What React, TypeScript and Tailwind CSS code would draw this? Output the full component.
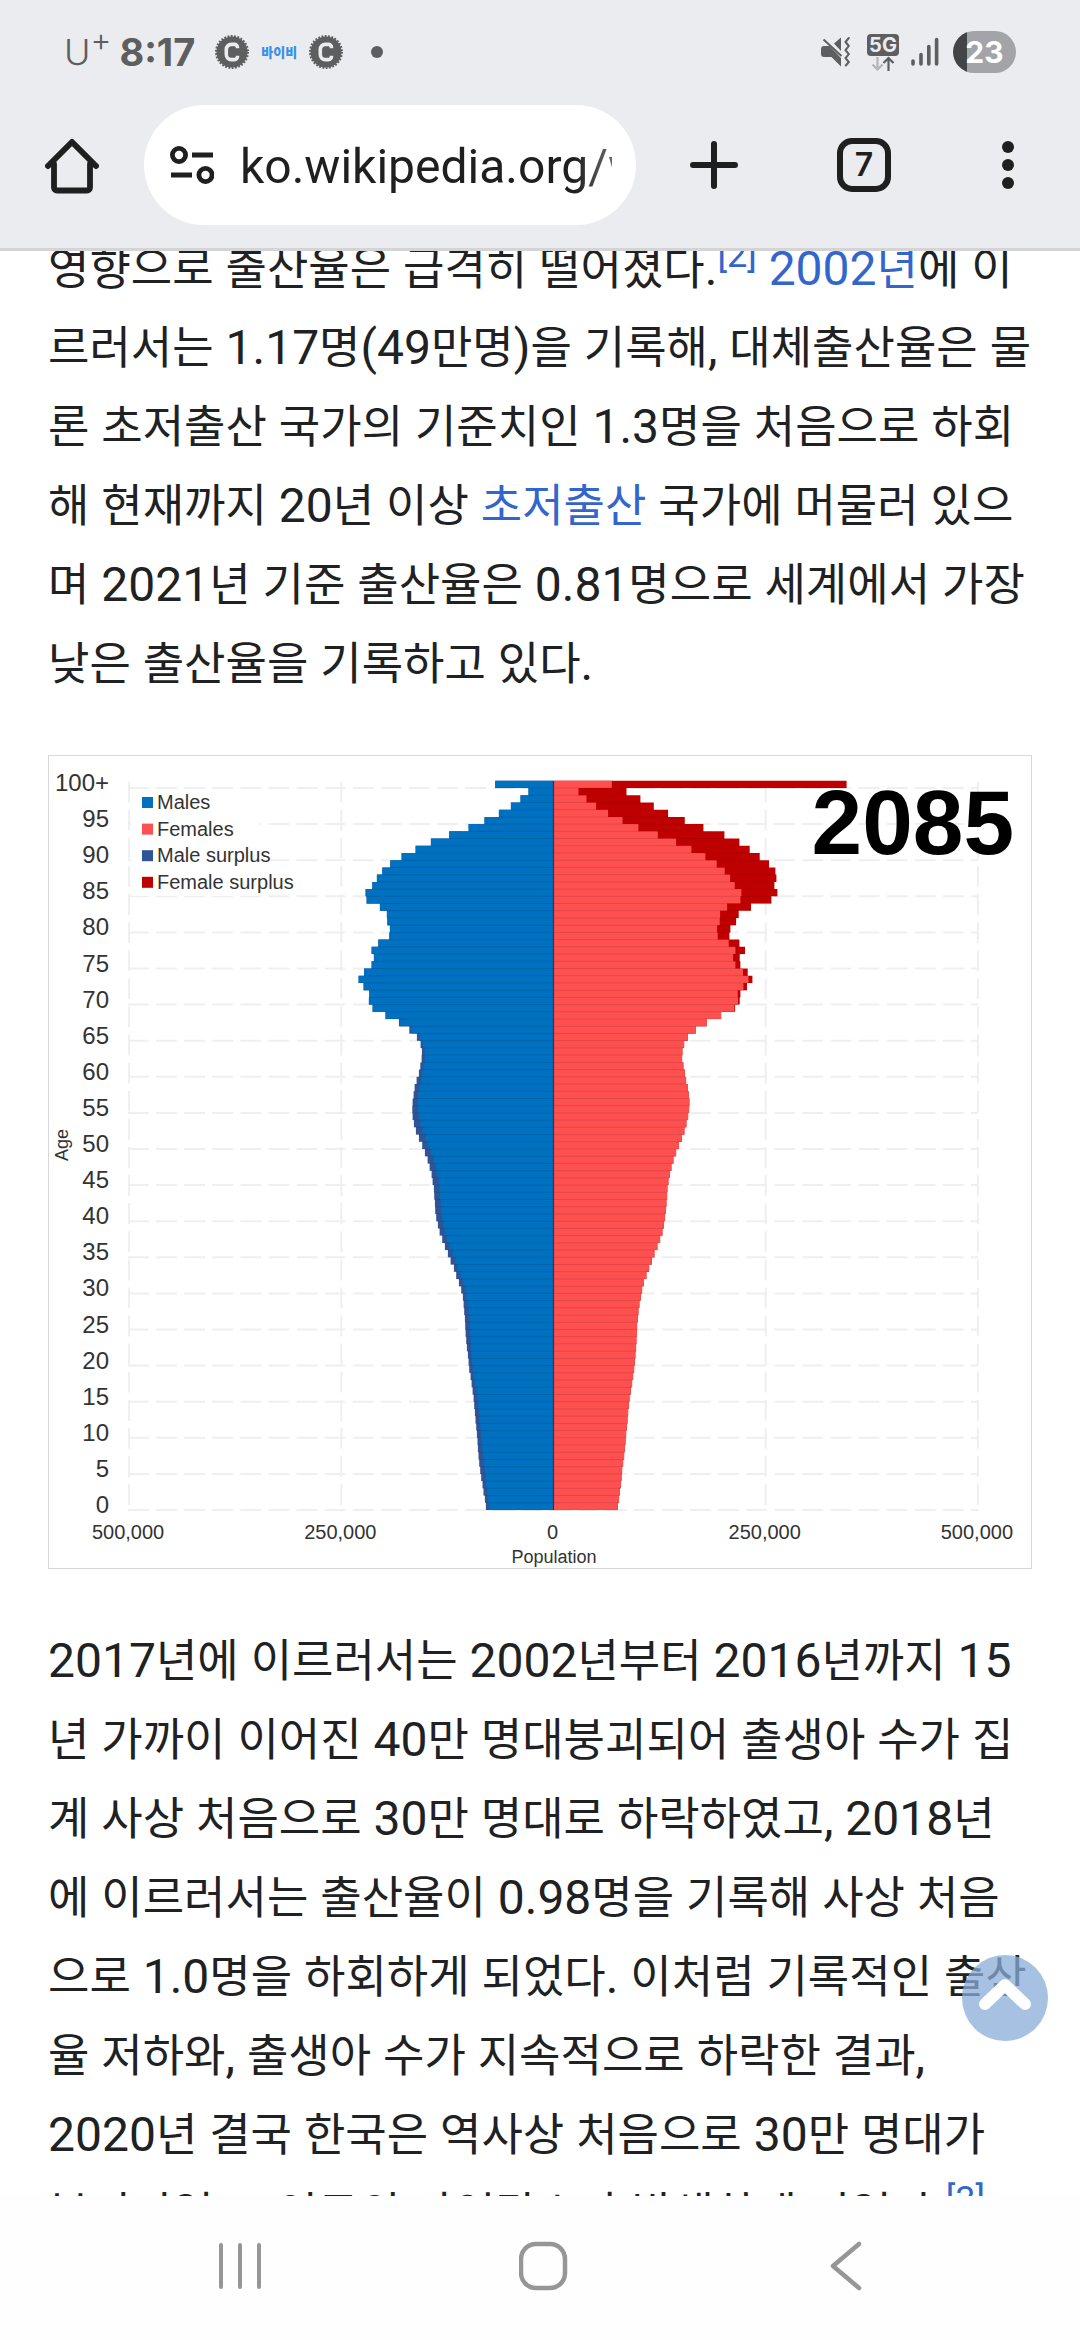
import type { ReactNode } from "react";

/* Bar lengths run from age 0 up to 100+; 637 units are 250,000 people. */
const MALES = [
  203, 206, 210, 213, 217, 220, 223, 225, 227, 228, 230, 232, 234, 236, 238, 240, 243, 246, 249, 253,
  255, 257, 260, 262, 264, 265, 266, 268, 270, 272, 277, 284, 292, 299, 309, 317, 326, 334, 342, 347,
  352, 355, 356, 358, 359, 363, 366, 372, 378, 386, 394, 404, 413, 419, 423, 424, 423, 420, 417, 411,
  404, 400, 396, 395, 399, 410, 433, 464, 505, 543, 554, 553, 570, 585, 569, 546, 539, 546, 526, 493,
  491, 499, 500, 521, 561, 564, 544, 530, 514, 490, 456, 414, 368, 313, 255, 207, 164, 128, 99, 75, 175,
];
const FEMALES = [
  193, 196, 199, 202, 204, 206, 209, 212, 214, 216, 218, 220, 222, 224, 226, 228, 232, 236, 239, 242,
  244, 246, 248, 249, 250, 251, 253, 255, 258, 262, 266, 271, 279, 287, 295, 303, 312, 320, 327, 331,
  334, 337, 339, 341, 342, 345, 349, 354, 360, 368, 376, 385, 393, 399, 404, 407, 408, 406, 403, 398,
  394, 390, 386, 387, 392, 403, 427, 460, 503, 545, 559, 561, 581, 597, 583, 561, 559, 575, 558, 528,
  531, 548, 556, 593, 654, 672, 663, 669, 666, 647, 619, 589, 558, 513, 450, 394, 344, 301, 261, 219, 880,
];

const ZERO_X = 504.5;
const BASE_Y = 754;
const ROW = 7.22;
const STEP = 212.2;
const UNIT = STEP / 637;

const LEGEND = [
  { label: "Males", color: "#0070c0" },
  { label: "Females", color: "#fc5052" },
  { label: "Male surplus", color: "#2f5597" },
  { label: "Female surplus", color: "#c00000" },
];
const X_TICKS = ["500,000", "250,000", "0", "250,000", "500,000"];

function bars(lengths: number[], side: 1 | -1) {
  let d = `M${ZERO_X} ${BASE_Y}`;
  lengths.forEach((n, age) => {
    d += `H${(ZERO_X + side * n * UNIT).toFixed(1)}V${(BASE_Y - (age + 1) * ROW).toFixed(1)}`;
  });
  return `${d}H${ZERO_X}Z`;
}

function PopulationPyramid() {
  const shared = MALES.map((m, i) => Math.min(m, FEMALES[i]));
  const ages = Array.from({ length: 21 }, (_, i) => i * 5);
  const rules = MALES.map((m, i) => {
    const y = (BASE_Y - i * ROW).toFixed(1);
    return `M${(ZERO_X - m * UNIT).toFixed(1)} ${y}H${(ZERO_X + FEMALES[i] * UNIT).toFixed(1)}`;
  }).join("");
  return (
    <svg
      viewBox="0 0 982 812"
      className="block w-full"
      role="img"
      aria-label="Population pyramid, 2085"
      fontFamily='"Liberation Sans", Arial, sans-serif'
      fill="#333"
    >
      <g stroke="#efefef" strokeWidth="2" strokeDasharray="20.8 7.3">
        {ages.map((a) => (
          <path key={a} d={`M79 ${BASE_Y - a * ROW}H929`} />
        ))}
        {[-2, -1, 1, 2].map((k) => (
          <path key={k} d={`M${ZERO_X + k * STEP} 749V26`} />
        ))}
      </g>
      <rect x="82" y="34" width="128" height="106" fill="#fff" />
      <path d={bars(MALES, -1)} fill="#2f5597" />
      <path d={bars(shared, -1)} fill="#0070c0" />
      <path d={bars(FEMALES, 1)} fill="#c00000" />
      <path d={bars(shared, 1)} fill="#ff5050" />
      <path d={rules} stroke="#000" strokeOpacity="0.12" strokeWidth="1" />
      <path d={`M${ZERO_X} 25V754`} stroke="#5a2038" strokeWidth="1.2" />
      <g fontSize="24" textAnchor="end">
        {ages.map((a) => (
          <text key={a} x="60" y={757 - a * ROW}>
            {a === 100 ? "100+" : a}
          </text>
        ))}
      </g>
      <g fontSize="20">
        {LEGEND.map((item, i) => (
          <g key={item.label}>
            <rect x="93" y={41 + i * 26.6} width="11" height="11" fill={item.color} />
            <text x="108" y={53 + i * 26.6}>
              {item.label}
            </text>
          </g>
        ))}
      </g>
      <g fontSize="20" textAnchor="middle">
        {X_TICKS.map((t, i) => (
          <text key={i} x={ZERO_X - 1 + (i - 2) * STEP} y="783">
            {t}
          </text>
        ))}
      </g>
      <text x="505" y="807" fontSize="18" textAnchor="middle">
        Population
      </text>
      <text transform="translate(19 389) rotate(-90)" fontSize="18" textAnchor="middle">
        Age
      </text>
      <text x="965" y="98" fontSize="91" fontWeight="700" textAnchor="end" fill="#000">
        2085
      </text>
    </svg>
  );
}

function CoinBadge() {
  return (
    <svg viewBox="0 0 34 34" className="size-[34px]" aria-hidden="true">
      <circle cx="17" cy="17" r="15.5" fill="#5d5e60" />
      <circle cx="17" cy="17" r="16" fill="none" stroke="#5d5e60" strokeWidth="2" strokeDasharray="1.8 1.55" />
      <path d="M22.5 13.2V12.4a3 3 0 0 0-3-3h-3.200a5 5 0 0 0-5 5v5.200a5 5 0 0 0 5 5h3.200a3 3 0 0 0 3-3v-.8" fill="none" stroke="#ebecef" strokeWidth="3.600" />
    </svg>
  );
}

function StatusBar() {
  return (
    <div className="flex h-[104px] items-center justify-between pr-16 pl-16 font-[Inter,sans-serif] text-[#5d5e60]">
      <div className="flex items-center">
        <span className="flex items-start text-[36px] leading-[40px] font-light">
          U<span className="text-[32px] leading-4">+</span>
        </span>
        <time className="ml-2 text-[38px] leading-[40px] font-bold">8:17</time>
        <span className="ml-5">
          <CoinBadge />
        </span>
        <span className="mx-3 font-['Noto_Sans_CJK_KR',sans-serif] text-[13px] font-black text-[#3591ea]">바이비</span>
        <CoinBadge />
        <span className="ml-7 size-3 rounded-full bg-[#5d5e60]" />
      </div>
      <div className="flex items-center">
        <svg viewBox="0 0 30 30" className="size-[30px]" aria-label="무음">
          <path d="M0 12a3 3 0 0 1 3-3h5.500L20 21v8.600L10.500 20H3a3 3 0 0 1-3-3z" fill="#5d5e60" />
          <path d="M13 6.500 20 .5V14z" fill="#5d5e60" />
          <path d="M2.500 2.500 20.500 19" stroke="#5d5e60" strokeWidth="2" />
          <path d="m27.800 1-3.300 4 3.300 4-3.300 4.200 3.300 4-3.300 4 3.300 3.800-3 3.500" fill="none" stroke="#5d5e60" strokeWidth="2" strokeLinecap="round" strokeLinejoin="round" />
        </svg>
        <div className="ml-4 flex w-8 flex-col items-center">
          <span className="w-8 rounded-[4px] bg-[#5d5e60] text-center text-[20px] leading-[22px] font-bold text-[#ebecef]">5G</span>
          <svg viewBox="0 0 26 15" className="h-[15px] w-[26px]" aria-hidden="true" fill="none" strokeWidth="2.200">
            <path d="M7.500 1v11.500M2.500 8.500l5 5 5-5" stroke="#b4b5b8" />
            <path d="M18.500 15V2.500M13.500 7l5-5 5 5" stroke="#5d5e60" />
          </svg>
        </div>
        <svg viewBox="0 0 28 30" className="ml-3 h-[30px] w-7" aria-label="신호" stroke="#5d5e60" strokeWidth="3.600" strokeLinecap="round">
          <path d="M2 27v-3M10 27V17.500M17.800 27V9.500M25.600 27V2.500" />
        </svg>
        <div className="ml-[14px] flex h-[42px] w-[63px] items-center justify-center rounded-full bg-linear-to-r from-[#434445] from-[22%] to-[#a3a4a8] to-[22%] text-[30px] font-bold text-white">
          23
        </div>
      </div>
    </div>
  );
}

function Toolbar() {
  return (
    <div className="flex h-[144px] items-start pt-px pr-[66px] pl-[45px] text-[#1f1f1f]">
      <button type="button" aria-label="홈" className="mt-[33px]">
        <svg viewBox="0 0 54 56" className="h-14 w-[54px]" fill="none" stroke="currentColor" strokeWidth="5.800" strokeLinecap="round" strokeLinejoin="round">
          <path d="M3 28 27 4l24 24" strokeWidth="6" />
          <path d="M9 26v23.500a3 3 0 0 0 3 3h30a3 3 0 0 0 3-3V26" />
        </svg>
      </button>
      <form className="ml-[45px] flex h-[120px] min-w-0 flex-1 items-center rounded-full bg-white pr-6 pl-[26px]" onSubmit={(e) => e.preventDefault()}>
        <button type="button" aria-label="사이트 정보" className="shrink-0">
          <svg viewBox="0 0 44 40" className="h-10 w-11" fill="none" stroke="currentColor" strokeWidth="4.800">
            <circle cx="9" cy="10" r="6.600" />
            <circle cx="35.500" cy="30" r="6.600" />
            <path d="M22 10h21M1 30h21" />
          </svg>
        </button>
        <input
          type="text"
          aria-label="주소"
          defaultValue="ko.wikipedia.org/wiki"
          className="ml-[26px] min-w-0 flex-1 bg-transparent mask-r-from-90% mask-r-to-120% pt-1 font-[Roboto,sans-serif] text-[48px] leading-[64px] outline-none"
        />
      </form>
      <button type="button" aria-label="새 탭" className="mt-9 ml-[54px]">
        <svg viewBox="0 0 48 48" className="size-12" stroke="currentColor" strokeWidth="6" strokeLinecap="round">
          <path d="M24 3v42M3 24h42" />
        </svg>
      </button>
      <button type="button" aria-label="탭 7개" className="mt-[33px] ml-[99px] flex size-[54px] items-center justify-center rounded-[15px] border-6 border-current font-[Inter,sans-serif] text-[32px] leading-none font-semibold">
        7
      </button>
      <button type="button" aria-label="메뉴" className="mt-9 ml-[111px] flex h-12 flex-col justify-between">
        <span className="size-3 rounded-full bg-current" />
        <span className="size-3 rounded-full bg-current" />
        <span className="size-3 rounded-full bg-current" />
      </button>
    </div>
  );
}

/* Hangul is set one step smaller than the Latin letters and digits beside it. */
function Mixed({ children }: { children: string }) {
  return (
    <>
      {children.split(/([가-힣]+)/).map((run, i) =>
        i % 2 === 1 ? (
          <span key={i} className="text-[45px] leading-none">
            {run}
          </span>
        ) : (
          run
        ),
      )}
    </>
  );
}

function WikiLink({ children }: { children: ReactNode }) {
  return (
    <a href="#" className="text-[#3366cc]">
      {children}
    </a>
  );
}

function Reference({ n }: { n: number }) {
  return (
    <sup className="text-[36px] leading-none">
      <WikiLink>[{n}]</WikiLink>
    </sup>
  );
}

function NavBar() {
  return (
    <nav className="flex h-36 shrink-0 items-start bg-[#fefefe] pt-[45px] pr-20 pl-22 text-[#969696]">
      <button type="button" aria-label="최근 앱" className="flex flex-1 justify-center">
        <svg viewBox="0 0 50 50" className="size-[50px]" stroke="currentColor" strokeWidth="4" strokeLinecap="round">
          <path d="M6 4v42M25 4v42M44 4v42" />
        </svg>
      </button>
      <button type="button" aria-label="홈 화면" className="flex flex-1 justify-center">
        <svg viewBox="0 0 50 50" className="size-[50px]" fill="none" stroke="currentColor" strokeWidth="4.500">
          <rect x="2" y="3" width="44" height="44" rx="15" />
        </svg>
      </button>
      <button type="button" aria-label="뒤로" className="flex flex-1 justify-center">
        <svg viewBox="0 0 50 50" className="size-[50px]" fill="none" stroke="currentColor" strokeWidth="4.500" strokeLinecap="round" strokeLinejoin="round">
          <path d="M36 3 10 25l26 22" />
        </svg>
      </button>
    </nav>
  );
}

export default function App() {
  return (
    <div className="relative flex h-screen flex-col overflow-hidden bg-white">
      <header className="shrink-0 border-b-3 border-[#d4d4d6] bg-[#ebecef]">
        <StatusBar />
        <Toolbar />
      </header>
      <main className="min-h-0 flex-1 overflow-hidden">
        <article className="-mt-[22px] px-12 font-[Roboto,'Noto_Sans_CJK_KR',sans-serif] text-[48px] leading-[79px] text-[#202122]">
          <p>
            <Mixed>영향으로 출산율은 급격히 떨어졌다.</Mixed>
            <Reference n={2} />{" "}
            <WikiLink>
              <Mixed>2002년</Mixed>
            </WikiLink>
            <Mixed>
              에 이르러서는 1.17명(49만명)을 기록해, 대체출산율은 물론 초저출산 국가의 기준치인 1.3명을 처음으로 하회해 현재까지
              20년 이상
            </Mixed>{" "}
            <WikiLink>
              <Mixed>초저출산</Mixed>
            </WikiLink>{" "}
            <Mixed>
              국가에 머물러 있으며 2021년 기준 출산율은 0.81명으로 세계에서 가장 낮은 출산율을 기록하고 있다.
            </Mixed>
          </p>
          <figure className="mt-[52px] mb-[52px] border border-[#d6d7d9]">
            <PopulationPyramid />
          </figure>
          <p>
            <Mixed>
              2017년에 이르러서는 2002년부터 2016년까지 15년 가까이 이어진 40만 명대붕괴되어 출생아 수가 집계 사상 처음으로
              30만 명대로 하락하였고, 2018년에 이르러서는 출산율이 0.98명을 기록해 사상 처음으로 1.0명을 하회하게 되었다.
              이처럼 기록적인 출산율 저하와, 출생아 수가 지속적으로 하락한 결과, 2020년 결국 한국은 역사상 처음으로 30만
              명대가 붕괴되었고, 인구의 자연감소가 발생하게 되었다.
            </Mixed>
            <Reference n={3} />
          </p>
        </article>
      </main>
      <button
        type="button"
        aria-label="맨 위로"
        className="absolute right-8 bottom-[299px] flex size-[86px] items-center justify-center rounded-full bg-[#88acd7]/75"
      >
        <svg viewBox="0 0 54 34" className="mb-2 h-[34px] w-[54px]" fill="none" stroke="#fff" strokeWidth="12" strokeLinecap="round" strokeLinejoin="round">
          <path d="M7 27 27 8l20 19" />
        </svg>
      </button>
      <NavBar />
    </div>
  );
}
